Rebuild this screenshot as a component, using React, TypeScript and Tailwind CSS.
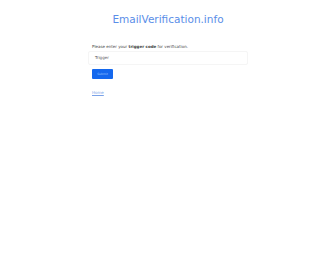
export default function App() {
  return (
    <div className="w-[336px] h-[280px] bg-white" style={{ fontFamily: '"DejaVu Sans", sans-serif' }}>
      <div className="pt-[13px] text-center text-[10.5px] leading-[12px] text-[#5a8ee8]">EmailVerification.info</div>
      <div className="mx-auto w-[160px] pt-[19px]">
        <div className="pl-[4px] text-[4px] leading-[5px] text-[#444]">
          Please enter your <b>trigger code</b> for verification.
        </div>
        <div className="mt-[2px] h-[14px] border border-[#f5f5f5] rounded-[2px] flex items-center pl-[6px] text-[4px] text-[#555]">
          Trigger
        </div>
        <div className="pl-[4px] mt-[4px]">
          <div className="w-[21px] h-[10px] bg-[#1468ee] rounded-[1px] flex items-center justify-center text-[3px] text-[#9cc0ff]">Submit</div>
        </div>
        <div className="pl-[4px] mt-[11px] text-[4px] leading-[5px] text-[#7aa2e8] underline">Home</div>
      </div>
    </div>
  );
}
